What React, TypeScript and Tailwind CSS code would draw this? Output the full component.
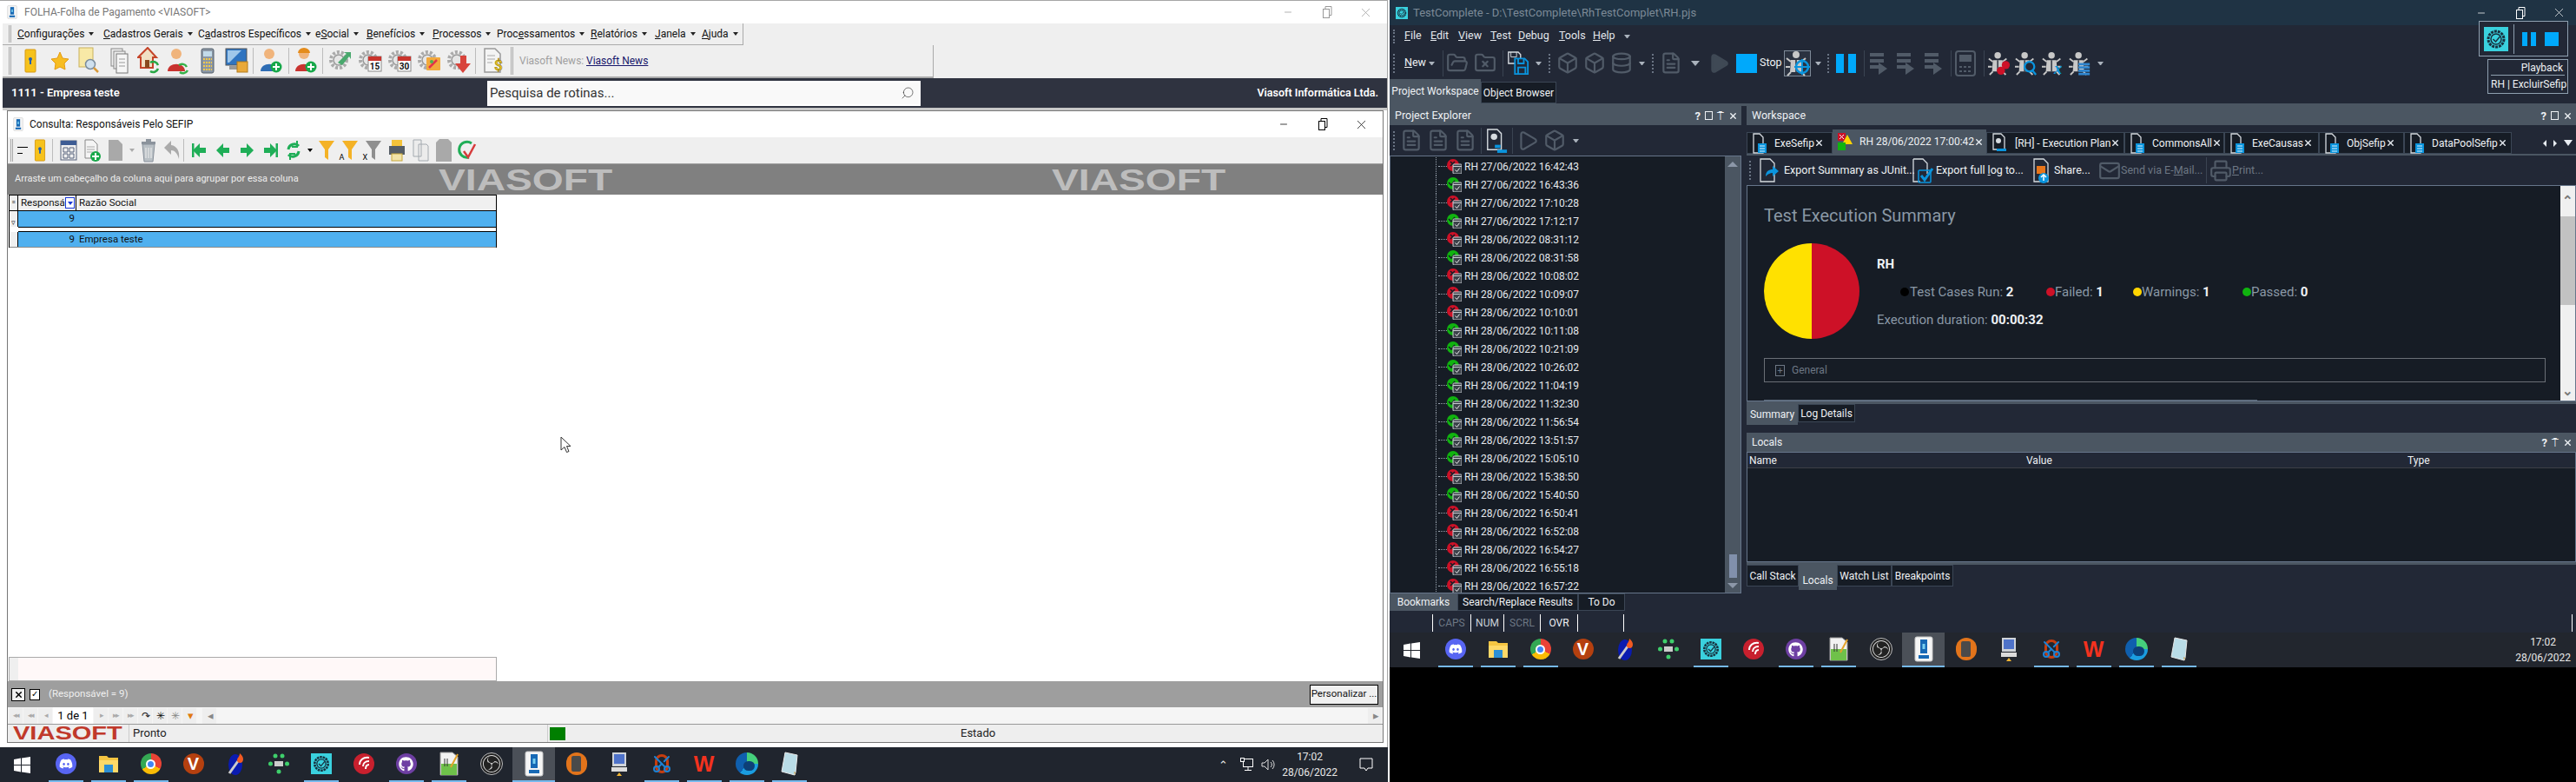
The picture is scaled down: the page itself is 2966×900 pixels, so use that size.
import type { ReactNode } from "react";
import {
  Box,
  Database,
  FileText,
  FolderOpen,
  FolderX,
  Mail,
  Minus,
  Play,
  Printer,
  Scissors,
  Search,
  X,
} from "lucide-react";
import { FaDiscord, FaGithub } from "react-icons/fa";
import { SiObsstudio } from "react-icons/si";

const caret = "inline-block h-0 w-0 border-x-[3px] border-t-[4px] border-x-transparent";

const Sep = ({ className = "" }: { className?: string }) => (
  <div className={`h-[30px] w-px shrink-0 ${className}`} />
);

const Cell = ({ className = "w-[34px]", children }: { className?: string; children: ReactNode }) => (
  <div className={`flex shrink-0 items-center justify-center ${className}`}>{children}</div>
);

/* ---------- small colour icons of the payroll app ---------- */

const Gear = ({ children }: { children?: ReactNode }) => (
  <svg width="30" height="32" viewBox="0 0 30 32">
    <circle cx="13" cy="15" r="9" fill="none" stroke="#aaa" strokeWidth="4" strokeDasharray="3 2" />
    <circle cx="13" cy="15" r="6" fill="#e6e6e6" stroke="#999" strokeWidth="1.5" />
    {children}
  </svg>
);

const Person = ({ body, badge }: { body: string; badge?: ReactNode }) => (
  <svg width="26" height="32" viewBox="0 0 26 32">
    <circle cx="11" cy="8" r="6" fill="#f0b47c" />
    <path d="M1 28 C1 17 21 17 21 28 Z" fill={body} />
    {badge}
  </svg>
);

const plusBadge = (
  <g>
    <circle cx="19" cy="23" r="6.5" fill="#17a84a" />
    <path d="M19 19v8M15 23h8" stroke="#fff" strokeWidth="2" />
  </g>
);

const PaperIcon = ({ fill = "#f4f4f4", stroke = "#999", children }: { fill?: string; stroke?: string; children?: ReactNode }) => (
  <svg width="26" height="32" viewBox="0 0 26 32">
    <path d="M3 2h12l6 6v21H3z" fill={fill} stroke={stroke} strokeWidth="1.5" />
    {children}
  </svg>
);

const Funnel = ({ fill, mark }: { fill: string; mark?: string }) => (
  <div className="relative">
    <svg width="20" height="26" viewBox="0 0 20 26">
      <path d="M1 2h18l-7 10v12l-4-3v-9z" fill={fill} />
    </svg>
    {mark && <span className="absolute bottom-0 -left-[2px] text-[9px] leading-none text-black">{mark}</span>}
  </div>
);

const Arrow = ({ dir, bar }: { dir: "l" | "r"; bar?: boolean }) => (
  <svg width="18" height="20" viewBox="0 0 18 20" className={dir === "l" ? "" : "-scale-x-100"}>
    <path d="M9 2 1 10l8 8v-5h7V7H9z" fill="#1fae57" />
    {bar && <rect x="0" y="2" width="2.5" height="16" fill="#1fae57" />}
  </svg>
);

const PayrollTools = () => (
  <>
    <div className="ml-[7px] mr-[3px] h-[32px] w-[3px] shrink-0 border-x border-[#a9a9a9]" />
    <div className="w-[2px] shrink-0" />
    <Cell>
      <svg width="14" height="28" viewBox="0 0 14 28"><rect x="1" y="1" width="12" height="26" rx="1" fill="#f6c21c" stroke="#d79a13" /><circle cx="7" cy="12" r="2" fill="#245fb0" /><rect x="6" y="12" width="2" height="6" fill="#245fb0" /></svg>
    </Cell>
    <Cell>
      <svg width="22" height="22" viewBox="0 0 22 22"><path d="m11 1 3 7 7 1-5 5 1 7-6-3-6 3 1-7-5-5 7-1z" fill="#f7bd22" stroke="#e59b14" /></svg>
    </Cell>
    <Cell>
      <svg width="28" height="32" viewBox="0 0 28 32"><rect x="2" y="1" width="16" height="22" fill="#f8e9a6" stroke="#c9b25c" /><circle cx="15" cy="20" r="5.5" fill="#cfe0ee" stroke="#7b8c9c" strokeWidth="1.5" /><path d="m19 24 5 5" stroke="#d99a3a" strokeWidth="2.5" /></svg>
    </Cell>
    <Cell>
      <svg width="22" height="30" viewBox="0 0 22 30"><rect x="2" y="1" width="13" height="20" fill="#eee" stroke="#888" /><rect x="5" y="4" width="13" height="20" fill="#eee" stroke="#888" /><rect x="8" y="7" width="13" height="22" fill="#f6f6f6" stroke="#777" /><path d="M11 13h7M11 17h7M11 21h7" stroke="#999" /></svg>
    </Cell>
    <Cell>
      <svg width="26" height="32" viewBox="0 0 26 32"><path d="M12 1 1 12h3v12h14V12h4z" fill="#f1e0c4" stroke="#c5452a" strokeWidth="2" /><rect x="9" y="15" width="5" height="9" fill="#8a4a1e" /><path d="M15 18a6 6 0 0 1 9 3M24 25a6 6 0 0 1-9 3" fill="none" stroke="#28a745" strokeWidth="2.5" /></svg>
    </Cell>
    <Cell>
      <Person body="#c8332f" badge={<path d="M14 21a6 6 0 0 1 9 2M24 27a6 6 0 0 1-9 2" fill="none" stroke="#36b24a" strokeWidth="2.5" />} />
    </Cell>
    <Cell>
      <svg width="16" height="30" viewBox="0 0 16 30"><rect x="1" y="1" width="14" height="28" rx="2" fill="#8b97a5" stroke="#55606c" /><rect x="3" y="4" width="10" height="6" fill="#c3dbe9" /><path d="M3 13h10M3 17h10M3 21h10M3 25h10" stroke="#f2c84b" strokeWidth="2" strokeDasharray="2 1" /></svg>
    </Cell>
    <Cell>
      <svg width="28" height="30" viewBox="0 0 28 30"><rect x="1" y="1" width="24" height="19" fill="#2f74c0" stroke="#555" /><path d="M3 3h16L5 17H3z" fill="#9fc7ea" /><rect x="5" y="21" width="14" height="4" fill="#999" /><rect x="14" y="16" width="12" height="12" fill="#e9a93a" stroke="#b27a1c" /></svg>
    </Cell>
    <Sep className="ml-px mr-[3px] bg-[#bcbcbc]" />
    <Cell><Person body="#2e6db4" badge={plusBadge} /></Cell>
    <Sep className="ml-[3px] mr-[2px] bg-[#bcbcbc]" />
    <Cell>
      <Person body="#c8332f" badge={<g><path d="M4 7a7 6 0 0 1 14 0z" fill="#e48c1c" />{plusBadge}</g>} />
    </Cell>
    <Sep className="ml-[2px] mr-[3px] bg-[#bcbcbc]" />
    <Cell><Gear><path d="M12 18 22 8l-3-2h8v8l-2-3-8 10z" fill="#49a86d" /></Gear></Cell>
    <Cell><Gear><rect x="13" y="11" width="15" height="17" fill="#fff" stroke="#888" /><rect x="13" y="11" width="15" height="5" fill="#c9342d" /><text x="20.5" y="26" textAnchor="middle" fontSize="10" fontWeight="700" fill="#111">15</text></Gear></Cell>
    <Cell><Gear><rect x="13" y="11" width="15" height="17" fill="#fff" stroke="#888" /><rect x="13" y="11" width="15" height="5" fill="#c9342d" /><text x="20.5" y="26" textAnchor="middle" fontSize="10" fontWeight="700" fill="#111">30</text></Gear></Cell>
    <Cell><Gear><rect x="12" y="12" width="16" height="15" rx="1" fill="#f2a93c" /><path d="m15 24 9-9" stroke="#e2334a" strokeWidth="2.5" /><circle cx="18" cy="17" r="2" fill="#4cb050" /></Gear></Cell>
    <Cell><Gear><path d="M17 10h7v9h5L20 30l-9-11h6z" fill="#d8443c" /></Gear></Cell>
    <Sep className="ml-[2px] mr-[3px] bg-[#bcbcbc]" />
    <Cell>
      <PaperIcon><path d="M6 10h9M6 14h9M6 18h6" stroke="#aaa" /><text x="19" y="27" textAnchor="middle" fontSize="17" fontWeight="700" fill="#e8c21f" stroke="#8a7714" strokeWidth=".5">$</text></PaperIcon>
    </Cell>
  </>
);

const menus: [string, string, string, string][] = [
  ["", "C", "onfigurações", "w-[99px]"],
  ["", "C", "adastros Gerais", "w-[109px]"],
  ["C", "a", "dastros Específicos", "w-[135px]"],
  ["e", "S", "ocial", "w-[59px]"],
  ["", "B", "enefícios", "w-[76px]"],
  ["", "P", "rocessos", "w-[74px]"],
  ["Proc", "e", "ssamentos", "w-[108px]"],
  ["", "R", "elatórios", "w-[74px]"],
  ["", "J", "anela", "w-[54px]"],
  ["", "A", "juda", "w-[48px]"],
];

const WinButtons = ({ color }: { color: string }) => (
  <div className={`flex items-center ${color}`}>
    <Cell className="w-[45px]"><Minus size={12} strokeWidth={1.5} /></Cell>
    <Cell className="w-[45px]">
      <svg width="12" height="14" viewBox="0 0 12 14" fill="none" stroke="currentColor"><rect x="1.5" y="3.5" width="7" height="10" /><path d="M4 3V.5h7v10H9" /></svg>
    </Cell>
    <Cell className="w-[45px]"><X size={17} strokeWidth={1} /></Cell>
  </div>
);

const Logo = ({ className }: { className: string }) => (
  <div className={`origin-left scale-x-[1.32] font-['Liberation_Sans',sans-serif] font-bold leading-none ${className}`}>VIASOFT</div>
);

const NavBtn = ({ g, className = "text-[#aaa]" }: { g: string; className?: string }) => (
  <div className={`flex h-[18px] w-[16px] shrink-0 items-center justify-center bg-[#eeeeee] text-[9px] leading-none tracking-[-2px] ${className}`}>{g}</div>
);

const PayrollWindow = () => (
  <div className="flex h-[860px] w-[1598px] flex-col border-r border-t border-[#a6a6a6] bg-white pl-[3px] text-black">
    <div className="flex h-[26px] shrink-0 items-center justify-between">
      <div className="flex items-center gap-[8px] pl-[5px] text-[12px] text-[#777]">
        <AppGlyph small />
        <span>FOLHA-Folha de Pagamento &lt;VIASOFT&gt;</span>
      </div>
      <div className="pr-[2px]"><WinButtons color="text-[#999]" /></div>
    </div>
    <div className="h-[25px] shrink-0 bg-[#efefef]">
      <div className="flex h-[25px] w-[853px] items-center border-b border-r border-[#aaa] text-[12px] text-[#111]">
        <div className="ml-[7px] mr-[7px] h-[20px] w-[3px] shrink-0 border-x border-[#a9a9a9]" />
        {menus.map(([pre, u, post, w]) => (
          <div key={pre + u + post} className={`flex shrink-0 items-center gap-[5px] ${w}`}>
            <span>{pre}<u>{u}</u>{post}</span>
            <span className={`${caret} border-t-[#222]`} />
          </div>
        ))}
      </div>
    </div>
    <div className="h-[38px] shrink-0 bg-[#efefef]">
      <div className="flex h-[38px] w-[1072px] items-center border-b-2 border-r border-[#aaa]">
        <PayrollTools />
        <div className="ml-[3px] mr-[7px] h-[32px] w-[3px] shrink-0 border-x border-[#a9a9a9]" />
        <span className="w-[70px] text-[12px] text-[#a0a0a0]">Viasoft News:</span>
        <span className="ml-[7px] text-[12px] text-[#17176b] underline">Viasoft News</span>
      </div>
    </div>
    <div className="flex h-[34px] shrink-0 items-center justify-between bg-[#2f3340] pl-[10px] pr-[10px] text-white">
      <span className="w-[548px] text-[13px] font-semibold">1111 - Empresa teste</span>
      <div className="flex h-[29px] w-[499px] items-center justify-between border-2 border-white bg-[#f9f9f9] pl-[1px] pr-[5px] text-[15px] text-[#333]">
        <span>Pesquisa de rotinas...</span>
        <Search size={16} strokeWidth={1} className="-scale-x-100" />
      </div>
      <span className="ml-auto text-[12.5px] font-semibold">Viasoft Informática Ltda.</span>
    </div>
    <div className="h-[3px] shrink-0 bg-[#c8c8c8]" />

    <div className="ml-[5px] flex h-[728px] w-[1585px] shrink-0 flex-col border border-[#777] bg-white">
      <div className="flex h-[30px] shrink-0 items-center justify-between">
        <div className="flex items-center gap-[7px] pl-[6px] text-[12px] text-[#111]">
          <AppGlyph small />
          <span>Consulta: Responsáveis Pelo SEFIP</span>
        </div>
        <div className="pr-[2px]"><WinButtons color="text-black" /></div>
      </div>
      <div className="flex h-[30px] shrink-0 items-center bg-[#efefef]">
        <div className="ml-[3px] h-[26px] w-[3px] shrink-0 border-x border-[#a9a9a9]" />
        <div className="ml-[5px] flex w-[12px] flex-col gap-[6px]"><div className="h-px w-[12px] bg-black" /><div className="h-px w-[6px] bg-black" /></div>
        <Cell className="ml-[6px] w-[16px]">
          <svg width="14" height="26" viewBox="0 0 14 28"><rect x="1" y="1" width="12" height="26" rx="1" fill="#f6c21c" stroke="#d79a13" /><circle cx="7" cy="12" r="2" fill="#245fb0" /><rect x="6" y="12" width="2" height="6" fill="#245fb0" /></svg>
        </Cell>
        <Sep className="ml-[6px] mr-[4px] !h-[26px] bg-[#bcbcbc]" />
        <Cell className="w-[27px]">
          <svg width="20" height="24" viewBox="0 0 20 24"><rect x="1" y="1" width="18" height="22" fill="#f0f0f0" stroke="#55607a" /><rect x="1" y="1" width="18" height="5" fill="#3d5c94" /><path d="M4 9h5v5H4zM11 9h5v5h-5zM4 16h5v5H4zM11 16h5v5h-5z" fill="none" stroke="#55607a" /></svg>
        </Cell>
        <Cell className="w-[27px]">
          <svg width="20" height="28" viewBox="0 0 20 28"><path d="M2 2h9l5 5v16H2z" fill="#f4f4f4" stroke="#888" /><path d="M4 10h9M4 13h9M4 16h7" stroke="#aaa" /><circle cx="14" cy="21" r="6" fill="#17a84a" /><path d="M14 17v8M10 21h8" stroke="#fff" strokeWidth="2" /></svg>
        </Cell>
        <Cell className="w-[27px]"><svg width="18" height="26" viewBox="0 0 18 26"><path d="M1 1h11l5 5v19H1z" fill="#a9a9a9" /></svg></Cell>
        <Cell className="w-[11px]"><span className={`${caret} border-t-[#aaa]`} /></Cell>
        <Cell className="w-[27px]"><svg width="18" height="28" viewBox="0 0 18 28"><path d="M2 7h14l-2 20H4z" fill="#b9c0c5" stroke="#88909a" /><rect x="1" y="4" width="16" height="3" fill="#8b939c" /><rect x="6" y="1" width="6" height="3" fill="#8b939c" /><path d="M6 11v12M9 11v12M12 11v12" stroke="#f0f0f0" /></svg></Cell>
        <Cell className="w-[27px]"><svg width="20" height="24" viewBox="0 0 20 24"><path d="M9 1 1 9l8 8v-5c4 0 7 3 9 10 1-9-2-15-9-16z" fill="#aaa" /></svg></Cell>
        <Sep className="mr-[4px] !h-[26px] bg-[#bcbcbc]" />
        <Cell className="w-[27px]"><Arrow dir="l" bar /></Cell>
        <Cell className="w-[27px]"><Arrow dir="l" /></Cell>
        <Cell className="w-[27px]"><Arrow dir="r" /></Cell>
        <Cell className="w-[27px]"><Arrow dir="r" bar /></Cell>
        <Cell className="w-[27px]">
          <svg width="18" height="26" viewBox="0 0 18 26" fill="none" stroke="#1fae57" strokeWidth="3"><path d="M3 12a7 7 0 0 1 12-4M15 14a7 7 0 0 1-12 4" /><path d="M13 2v7h-6M5 24v-7h6" strokeWidth="2" /></svg>
        </Cell>
        <Cell className="w-[11px]"><span className={`${caret} border-t-black`} /></Cell>
        <Cell className="w-[27px]"><Funnel fill="#f4b226" /></Cell>
        <Cell className="w-[27px]"><Funnel fill="#f4b226" mark="A" /></Cell>
        <Cell className="w-[27px]"><Funnel fill="#8f8f8f" mark="X" /></Cell>
        <Cell className="w-[27px]"><svg width="20" height="26" viewBox="0 0 20 26"><rect x="4" y="1" width="12" height="7" fill="#f4c33a" /><rect x="1" y="8" width="18" height="10" fill="#555d66" /><rect x="4" y="17" width="12" height="8" fill="#f1e3a8" stroke="#c9a93c" /></svg></Cell>
        <Cell className="w-[27px]"><svg width="20" height="28" viewBox="0 0 20 28"><path d="M2 2h9v19H2zM8 7h9l2 2v17H8z" fill="#ececec" stroke="#a4aab0" /></svg></Cell>
        <Cell className="w-[27px]"><svg width="20" height="28" viewBox="0 0 20 28"><path d="M1 5 5 1h10l4 4v22H1z" fill="#a9a9a9" /></svg></Cell>
        <Cell className="w-[27px]"><svg width="22" height="28" viewBox="0 0 22 28" fill="none"><path d="M16 6a9 9 0 1 0-3 16" stroke="#1fae57" strokeWidth="3" /><path d="m7 15 5 7 8-15" stroke="#d63b3b" strokeWidth="2.5" /></svg></Cell>
      </div>
      <div className="h-px shrink-0 bg-[#a0a0a0]" />
      <div className="flex h-[35px] shrink-0 items-center bg-[#808080] pl-[8px] text-[11px] text-[#eee]">
        <span className="w-[488px]">Arraste um cabeçalho da coluna aqui para agrupar por essa coluna</span>
        <Logo className="w-[706px] text-[35px] text-[#bdbdbd]" />
        <Logo className="text-[35px] text-[#bdbdbd]" />
      </div>

      <div className="relative flex h-[560px] shrink-0 flex-col pl-px">
        <div className="flex w-[562px] flex-col border-x border-black text-[11.5px] text-[#111]">
          <div className="flex h-[19px] items-center border-y border-black bg-[#f0f0f0]">
            <div className="flex h-full w-[10px] items-center justify-center border-r border-black text-[7px] leading-none">≡</div>
            <div className="flex h-full w-[67px] items-center justify-between border-r border-black pl-[3px] pr-[1px]">
              <span className="overflow-hidden">Responsá</span>
              <span className="flex h-[13px] w-[11px] shrink-0 items-center justify-center border border-[#1a37d6] bg-white"><span className={`${caret} border-t-[#1a37d6]`} /></span>
            </div>
            <span className="pl-[3px]">Razão Social</span>
          </div>
          <div className="flex h-[18px] items-stretch">
            <div className="flex w-[10px] items-end justify-center border-r border-black bg-[#f0f0f0] text-[9px] leading-none">▿</div>
            <div className="flex w-[67px] items-center justify-end bg-[#4fb0ef] pr-[2px]">9</div>
            <div className="flex-1 bg-[#4fb0ef]" />
          </div>
          <div className="ml-[10px] h-[6px] border-y border-black bg-white" />
          <div className="flex h-[18px] items-stretch border-b border-[#8a8a8a]">
            <div className="w-[10px] border-r border-black bg-[#f0f0f0]" />
            <div className="flex w-[67px] items-center justify-end bg-[#4fb0ef] pr-[2px]">9</div>
            <div className="flex flex-1 items-center bg-[#4fb0ef] pl-[3px]">Empresa teste</div>
          </div>
        </div>
        <div className="mt-auto flex h-[28px] w-[562px] border border-[#aaa] bg-[#fff8f8]">
          <div className="w-[10px] bg-[#efefef]" />
        </div>
        {/* mouse pointer left over the empty grid */}
        <svg width="13" height="20" viewBox="0 0 13 20" className="absolute left-[636px] top-[278px]">
          <path d="M1 1v15l4-3.5 2.5 6 2.5-1-2.5-6H12z" fill="#fff" stroke="#333" />
        </svg>
      </div>

      <div className="flex h-[30px] shrink-0 items-center justify-between bg-[#9e9e9e] pl-[4px] pr-[5px]">
        <div className="flex items-center gap-[5px]">
          <div className="flex h-[15px] w-[16px] items-center justify-center border border-black bg-[#f0f0f0]"><X size={11} strokeWidth={3} /></div>
          <div className="flex h-[13px] w-[12px] items-center justify-center border border-black bg-white text-[10px] leading-none">✓</div>
          <span className="ml-[5px] text-[11.5px] text-[#eee]">(Responsável = 9)</span>
        </div>
        <div className="flex h-[23px] w-[79px] items-center justify-center border border-black bg-[#f0f0f0] text-[11.5px] text-[#111]">Personalizar ...</div>
      </div>
      <div className="flex h-[20px] shrink-0 items-center gap-px border-b border-[#999] bg-[#f5f5f5] pl-px pr-px">
        <NavBtn g="◂◂" /><NavBtn g="◂◂" /><NavBtn g="◂" />
        <div className="flex w-[46px] justify-center bg-white text-[13px]">1 de 1</div>
        <NavBtn g="▸" /><NavBtn g="▸▸" /><NavBtn g="▸▸" />
        <NavBtn g="↷" className="text-[12px] text-[#222]" />
        <NavBtn g="✳" className="text-[12px] text-[#111]" />
        <NavBtn g="✳" className="text-[12px] text-[#888]" />
        <NavBtn g="▾" className="text-[13px] text-[#e07a10]" />
        <NavBtn g="◂" className="ml-[6px] text-[13px] text-[#888]" />
        <NavBtn g="▸" className="ml-auto text-[13px] text-[#888]" />
      </div>
      <div className="flex min-h-0 flex-1 items-center bg-[#eeeeee] text-[13px] text-[#222]">
        <Logo className="ml-[6px] w-[133px] text-[22px] text-[#c0392b]" />
        <div className="h-full w-px bg-[#ccc]" />
        <span className="ml-[4px] w-[477px]">Pronto</span>
        <div className="h-full w-px bg-[#ccc]" />
        <div className="ml-[2px] mr-[455px] h-[15px] w-[18px] bg-[#007f00]" />
        <span>Estado</span>
      </div>
    </div>
    <div className="flex-1" />
  </div>
);

/* ---------- taskbar ---------- */

const AppGlyph = ({ small }: { small?: boolean }) => (
  <svg width={small ? 12 : 22} height={small ? 16 : 30} viewBox="0 0 22 30">
    <rect x="1" y="1" width="20" height="28" rx="2" fill="#f5f5f5" stroke="#c8c8c8" />
    <rect x="7" y="4" width="8" height="16" fill="#1769b5" />
    <rect x="9.5" y="9" width="3" height="6" fill="#79d0f0" />
    <rect x="5" y="22" width="12" height="4" fill="#1769b5" />
  </svg>
);

const TcBadge = ({ size }: { size: number }) => (
  <svg width={size} height={size} viewBox="0 0 28 28">
    <rect width="28" height="28" fill="#3ad1de" />
    <circle cx="14" cy="14" r="9" fill="none" stroke="#17313f" strokeWidth="3" strokeDasharray="3 1" />
    <circle cx="14" cy="14" r="6" fill="none" stroke="#17313f" strokeWidth="1.5" />
    <path d="m10.5 14 3 3 5-6" fill="none" stroke="#17313f" strokeWidth="1.5" />
  </svg>
);

const Round = ({ bg, children }: { bg: string; children?: ReactNode }) => (
  <div className={`flex h-[24px] w-[24px] items-center justify-center rounded-full ${bg}`}>{children}</div>
);

const taskIcons: { key: string; on: boolean; active?: boolean; node: ReactNode }[] = [
  { key: "discord", on: true, node: <Round bg="bg-[#5865f2]"><FaDiscord size={16} color="#fff" /></Round> },
  { key: "files", on: true, node: <svg width="24" height="24" viewBox="0 0 24 24"><path d="M1 3h9l2 2h11v17H1z" fill="#f5c542" /><rect x="1" y="8" width="22" height="14" fill="#ffd968" /><rect x="7" y="13" width="10" height="9" fill="#2d8fd5" /></svg> },
  { key: "chrome", on: true, node: <div className="flex h-[24px] w-[24px] items-center justify-center rounded-full bg-[conic-gradient(#ea4335_0_33%,#fbbc05_33%_66%,#34a853_66%_100%)]"><div className="h-[11px] w-[11px] rounded-full border-2 border-white bg-[#4285f4]" /></div> },
  { key: "vivaldi", on: false, node: <Round bg="bg-[#b5400f]"><span className="font-['Liberation_Sans',sans-serif] text-[20px] font-bold leading-none text-white">V</span></Round> },
  { key: "torch", on: false, node: <svg width="24" height="28" viewBox="0 0 24 28"><ellipse cx="11" cy="15" rx="8" ry="12" fill="#0a1bb0" /><path d="M4 25 14 11" stroke="#ccc" strokeWidth="3" /><path d="M16 2c4 3 5 7 3 10-2 2-6 1-6-2 0-3 3-4 3-8z" fill="#f15a22" /></svg> },
  { key: "dots", on: false, node: <svg width="24" height="24" viewBox="0 0 24 24" fill="#3ecf6b"><circle cx="8" cy="3" r="2.5" /><circle cx="16" cy="3" r="2.5" /><circle cx="2.5" cy="12" r="2.5" /><circle cx="21.5" cy="12" r="2.5" /><circle cx="12" cy="21" r="2.5" /><rect x="7" y="9" width="10" height="6" fill="#ccc" /></svg> },
  { key: "tc", on: true, node: <TcBadge size={24} /> },
  { key: "delphi", on: false, node: <Round bg="bg-[#c8202e]"><svg width="16" height="18" viewBox="0 0 16 18" fill="none" stroke="#fff" strokeWidth="2"><path d="M14 2C7 1 3 5 3 10M14 6c-5 0-7 3-7 6M14 10c-3 0-4 2-4 5" /></svg></Round> },
  { key: "github", on: true, node: <Round bg="bg-[#6e3fa3]"><FaGithub size={17} color="#fff" /></Round> },
  { key: "notes", on: true, node: <svg width="22" height="28" viewBox="0 0 22 28"><path d="M1 1h14l6 5v21H1z" fill="#f2f2f2" stroke="#999" /><rect x="2" y="14" width="18" height="13" fill="#6fc14a" /><path d="M6 8v9M9 8v9" stroke="#333" /><path d="m13 18 8-15" stroke="#e3a32b" strokeWidth="2" /></svg> },
  { key: "obs", on: false, node: <div className="flex h-[24px] w-[24px] items-center justify-center rounded-full bg-[#222] text-[#ddd] outline outline-1 outline-[#bbb]"><SiObsstudio size={20} /></div> },
  { key: "app", on: true, active: true, node: <AppGlyph /> },
  { key: "disk", on: false, node: <div className="flex h-[26px] w-[24px] items-center justify-center rounded-full bg-[#e2741b]"><div className="h-[18px] w-[11px] rounded-[2px] bg-[#4a4a4a]" /></div> },
  { key: "computer", on: false, node: <svg width="20" height="28" viewBox="0 0 20 28"><rect x="2" y="1" width="16" height="16" fill="#cfd3d8" /><rect x="4" y="3" width="12" height="11" fill="#4e72c9" /><rect x="1" y="18" width="18" height="5" fill="#dcdcdc" /><path d="M7 28h6l-3-4z" fill="#f2b632" /></svg> },
  { key: "snip", on: true, node: <div className="relative flex h-[28px] w-[24px] items-center justify-center"><div className="absolute h-[22px] w-[16px] rounded-full border-[3px] border-[#c63d0f]" /><Scissors size={24} className="relative -rotate-90 text-[#1c82d4]" /></div> },
  { key: "wps", on: true, node: <span className="font-['Liberation_Sans',sans-serif] text-[25px] font-bold leading-none text-[#f4321e]">W</span> },
  { key: "edge", on: true, node: <div className="flex h-[26px] w-[26px] items-center justify-center rounded-full bg-[conic-gradient(#45d07c_0_25%,#1a9de0_25%_60%,#0f5fae_60%_100%)]"><div className="ml-[6px] mt-[4px] h-[11px] w-[13px] rounded-full bg-[#0d3f77]" /></div> },
  { key: "pad", on: true, node: <svg width="22" height="28" viewBox="0 0 22 28"><path d="M6 1 20 4l-2 20-1 3L2 23z" fill="#b9dce7" stroke="#e8e8e8" /><path d="m18 24-1 3-1-4z" fill="#c9a153" /></svg> },
];

const Taskbar = ({ className, children }: { className: string; children: ReactNode }) => (
  <div className={`flex h-[40px] shrink-0 items-stretch ${className}`}>
    <div className="flex w-[51px] shrink-0 items-center justify-center">
      <svg width="19" height="19" viewBox="0 0 19 19" fill="#fff"><path d="M0 3 8 1.6V9H0zM9 1.4 19 0v9H9zM0 10h8v7.4L0 16zM9 10h10v9L9 17.6z" /></svg>
    </div>
    {taskIcons.map((t) => (
      <div key={t.key} className={`flex w-[49px] shrink-0 flex-col items-center justify-between ${t.active ? "bg-[#4b5058]" : ""}`}>
        <div className="flex flex-1 items-center justify-center">{t.node}</div>
        <div className={`h-[2px] shrink-0 ${t.on ? "bg-[#76b9ed]" : ""} ${t.active ? "w-full" : "w-[40px]"}`} />
      </div>
    ))}
    <div className="flex flex-1 items-center justify-end text-[#e8e8e8]">{children}</div>
  </div>
);

const Clock = () => (
  <div className="flex flex-col items-center text-[12px] leading-[18px]">
    <span>17:02</span>
    <span>28/06/2022</span>
  </div>
);

/* ---------- dark IDE ---------- */

const Grip = ({ className = "" }: { className?: string }) => (
  <div className={`h-[22px] w-[2px] shrink-0 border-l-2 border-dotted border-[#6a7484] ${className}`} />
);

const DSep = ({ className = "" }: { className?: string }) => (
  <div className={`h-[30px] w-px shrink-0 bg-[#3a4452] ${className}`} />
);

const Ico = ({ className = "", children }: { className?: string; children: ReactNode }) => (
  <div className={`flex w-[26px] shrink-0 items-center justify-center ${className}`}>{children}</div>
);

const DCaret = ({ className = "", big }: { className?: string; big?: boolean }) => (
  <span className={`h-0 shrink-0 border-x-transparent ${big ? "w-[9px] border-x-[5px] border-t-[6px] border-t-[#aab2bc]" : "w-[7px] border-x-[3.5px] border-t-[4px] border-t-[#aab2bc]"} ${className}`} />
);

const dim = { size: 27, strokeWidth: 2, color: "#515b68" };

const Rows = ({ blue }: { blue?: boolean }) => (
  <svg width="26" height="30" viewBox="0 0 26 30" fill="#515b68">
    <path d="M2 3h16v4H2zM2 10h16v4H2zM2 17h10v4H2z" />
    <path d={blue ? "M14 12l10 8-10 8z" : "M12 14l10 7-10 7z"} />
  </svg>
);

const BugShape = ({ children }: { children?: ReactNode }) => (
  <svg width="28" height="32" viewBox="0 0 28 32">
    <circle cx="12" cy="6" r="4" fill="#c8c8c8" />
    <path d="M6 12h12l1 14H5z" fill="#c8c8c8" />
    <path d="M6 14 1 10M18 14l5-4M5 20H0M19 20h5M6 26l-4 4M18 26l4 4" stroke="#c8c8c8" strokeWidth="2" />
    <path d="M12 12v14" stroke="#222836" strokeWidth="1.5" />
    {children}
  </svg>
);

const FileBlue = () => (
  <svg width="18" height="24" viewBox="0 0 18 24" className="shrink-0">
    <path d="M2 1h7l4 4v18H2z" fill="none" stroke="#d6dbe0" strokeWidth="1.3" />
    <rect x="7" y="12" width="10" height="11" fill="#0a94dd" />
    <path d="M9 15h6M9 18h6M9 21h6" stroke="#dff3ff" />
  </svg>
);

const PlanIcon = () => (
  <svg width="18" height="24" viewBox="0 0 18 24" className="shrink-0">
    <path d="M2 1h9l4 4v14H2z" fill="none" stroke="#d6dbe0" strokeWidth="1.3" />
    <circle cx="8" cy="9" r="3" fill="#d6dbe0" />
    <rect x="6" y="18" width="11" height="3" fill="#0a94dd" />
  </svg>
);

const TabX = () => <X size={11} strokeWidth={3} className="shrink-0 text-[#e8edf2]" />;

const DocTab = ({ w, label, icon = <FileBlue />, gap = "gap-[8px]" }: { w: string; label: string; icon?: ReactNode; gap?: string }) => (
  <div className={`flex h-[25px] shrink-0 items-center justify-between border border-[#3b4655] bg-[#161c25] pl-[5px] pr-[9px] ${w}`}>
    <div className={`flex items-center ${gap}`}>
      {icon}
      <span>{label}</span>
    </div>
    <TabX />
  </div>
);

const runs: [string, boolean][] = [
  ["27/06/2022 16:42:43", false], ["27/06/2022 16:43:36", true], ["27/06/2022 17:10:28", false],
  ["27/06/2022 17:12:17", true], ["28/06/2022 08:31:12", false], ["28/06/2022 08:31:58", true],
  ["28/06/2022 10:08:02", false], ["28/06/2022 10:09:07", false], ["28/06/2022 10:10:01", false],
  ["28/06/2022 10:11:08", true], ["28/06/2022 10:21:09", true], ["28/06/2022 10:26:02", true],
  ["28/06/2022 11:04:19", true], ["28/06/2022 11:32:30", true], ["28/06/2022 11:56:54", true],
  ["28/06/2022 13:51:57", true], ["28/06/2022 15:05:10", true], ["28/06/2022 15:38:50", false],
  ["28/06/2022 15:40:50", true], ["28/06/2022 16:50:41", false], ["28/06/2022 16:52:08", false],
  ["28/06/2022 16:54:27", false], ["28/06/2022 16:55:18", false], ["28/06/2022 16:57:22", false],
];

const RunIcon = ({ ok }: { ok: boolean }) => (
  <svg width="17" height="17" viewBox="0 0 17 17" className="shrink-0">
    <circle cx="7" cy="7" r="7" fill={ok ? "#10b30f" : "#cd1127"} />
    <path d={ok ? "m2 6 3 3 4-5" : "m4 3 5 5M9 3 4 8"} stroke="#161c25" strokeWidth="1.6" fill="none" />
    <rect x="7" y="6" width="10" height="11" rx="1" fill="#3c424a" stroke="#c9cdd2" />
    <path d="M7 8.5h10" stroke="#c9cdd2" />
    <path d="m9.5 12.5 2 2 3-4" stroke="#eee" fill="none" />
  </svg>
);

const PanelHead = ({ title, children, className = "" }: { title: string; children: ReactNode; className?: string }) => (
  <div className={`flex h-[22px] shrink-0 items-center justify-between bg-[#4b5662] pl-[6px] pr-[4px] text-[#eef1f4] ${className}`}>
    <span>{title}</span>
    <div className="flex items-center gap-[5px]">{children}</div>
  </div>
);

const Q = () => <span className="text-[13px] font-bold leading-none">?</span>;
const Sq = () => <div className="h-[10px] w-[9px] border border-[#eef1f4]" />;
const Pin = () => <span className="text-[13px] leading-none">⍑</span>;
const Xx = () => <X size={11} strokeWidth={3} />;

const TestComplete = () => (
  <div className="relative flex h-[900px] w-[1366px] flex-col bg-black text-[12px] text-[#eef1f4]">
    <div className="flex h-[29px] shrink-0 items-center justify-between bg-[#1f3344]">
      <div className="flex items-center gap-[6px] pl-[7px] text-[13px] text-[#7c8a97]">
        <TcBadge size={14} />
        <span>TestComplete - D:\TestComplete\RhTestComplet\RH.pjs</span>
      </div>
      <div className="mr-[-3px] text-white"><WinButtons color="text-white" /></div>
    </div>

    <div className="flex h-[25px] shrink-0 items-center bg-[#222836] text-[12.5px] text-[#e3e7ec]">
      <Grip className="ml-[4px] !h-[16px]" />
      <span className="ml-[11px] w-[30px]"><u>F</u>ile</span>
      <span className="w-[32px]"><u>E</u>dit</span>
      <span className="w-[37px]"><u>V</u>iew</span>
      <span className="w-[32px]"><u>T</u>est</span>
      <span className="w-[47px]"><u>D</u>ebug</span>
      <span className="w-[39px]"><u>T</u>ools</span>
      <span className="w-[36px]"><u>H</u>elp</span>
      <DCaret />
    </div>
    <div className="flex h-[37px] shrink-0 items-center bg-[#222836] text-[12.5px]">
      <Grip className="ml-[4px]" />
      <span className="ml-[11px] w-[24px]"><u>N</u>ew</span>
      <DCaret className="ml-[4px]" />
      <DSep className="ml-[9px]" />
      <Ico className="ml-[3px]"><FolderOpen {...dim} /></Ico>
      <Ico className="ml-[6px]"><FolderX {...dim} /></Ico>
      <DSep className="ml-[7px]" />
      <Ico className="ml-[4px]">
        <svg width="28" height="32" viewBox="0 0 28 32" fill="none"><path d="M2 2h12l3 3v11H2z" stroke="#d6dbe0" strokeWidth="1.5" /><path d="M5 2v6h7V2" stroke="#d6dbe0" /><path d="M10 10h12l4 4v15H10z" fill="#222836" stroke="#0a94dd" strokeWidth="2" /><path d="M14 10v6h7v-6M14 29v-8h9v8" stroke="#0a94dd" strokeWidth="2" /></svg>
      </Ico>
      <DCaret className="ml-[7px]" />
      <Grip className="ml-[8px]" />
      <Ico className="ml-[7px]"><Box {...dim} /></Ico>
      <Ico className="ml-[5px]"><Box {...dim} /></Ico>
      <Ico className="ml-[5px]"><Database {...dim} /></Ico>
      <DCaret className="ml-[7px]" />
      <Grip className="ml-[8px]" />
      <Ico className="ml-[7px]"><FileText {...dim} /></Ico>
      <DCaret big className="ml-[10px]" />
      <Ico className="ml-[9px]"><Play size={28} fill="#3f4955" color="#3f4955" /></Ico>
      <div className="ml-[7px] h-[22px] w-[24px] shrink-0 bg-[#00a9fb]" />
      <span className="ml-[3px] w-[26px]">Stop</span>
      <div className="ml-[2px] flex h-[30px] w-[31px] shrink-0 items-center justify-center border border-[#7e8a98] bg-[#2b3240]">
        <BugShape><circle cx="19" cy="20" r="7" fill="none" stroke="#0a94dd" strokeWidth="2.5" /><path d="M19 11v18M10 20h18" stroke="#0a94dd" strokeWidth="2" /></BugShape>
      </div>
      <DCaret className="ml-[5px]" />
      <Grip className="ml-[7px]" />
      <div className="ml-[8px] flex h-[22px] w-[23px] shrink-0 justify-between">
        <div className="w-[9px] bg-[#00a9fb]" /><div className="w-[9px] bg-[#00a9fb]" />
      </div>
      <DSep className="ml-[9px]" />
      <Ico className="ml-[4px]"><Rows /></Ico>
      <Ico className="ml-[5px]"><Rows /></Ico>
      <Ico className="ml-[6px]"><Rows /></Ico>
      <DSep className="ml-[6px]" />
      <Ico className="ml-[3px]">
        <svg width="24" height="30" viewBox="0 0 24 30"><rect x="1" y="1" width="22" height="28" rx="3" fill="none" stroke="#515b68" strokeWidth="2" /><rect x="5" y="5" width="14" height="8" fill="#515b68" /><path d="M5 19h3M10 19h3M15 19h3M5 24h3M10 24h3M15 24h3" stroke="#515b68" strokeWidth="2" /></svg>
      </Ico>
      <DSep className="ml-[8px]" />
      <Ico className="ml-[4px]"><BugShape><circle cx="22" cy="18" r="5" fill="#cd1127" /><circle cx="16" cy="25" r="5" fill="#cd1127" /></BugShape></Ico>
      <Ico className="ml-[5px]"><BugShape><circle cx="18" cy="20" r="6" fill="#222836" stroke="#0a94dd" strokeWidth="2.5" /><path d="m22 25 4 5" stroke="#0a94dd" strokeWidth="2.5" /></BugShape></Ico>
      <Ico className="ml-[5px]"><BugShape><text x="20" y="29" textAnchor="middle" fontSize="20" fontStyle="italic" fontWeight="700" fill="#0a94dd" fontFamily="Liberation Serif, serif">x</text></BugShape></Ico>
      <Ico className="ml-[5px]"><BugShape><path d="M12 17h14M12 21h14M12 25h14M12 29h14" stroke="#2f86d0" strokeWidth="3" /></BugShape></Ico>
      <DCaret className="ml-[7px]" />
    </div>

    <div className="flex h-[28px] shrink-0 items-end bg-[#222836] text-[12px]">
      <div className="flex h-[28px] w-[105px] items-center justify-center bg-[#4b5662]">Project Workspace</div>
      <div className="flex h-[25px] w-[87px] items-center justify-center border border-[#3b4655] bg-[#161c25]">Object Browser</div>
    </div>
    <div className="h-[3px] shrink-0 bg-[#4b5662]" />

    <div className="flex h-[583px] shrink-0 gap-[6px] bg-[#222836]">
      <div className="flex w-[405px] shrink-0 flex-col">
        <PanelHead title="Project Explorer" className="text-[12.5px]"><Q /><Sq /><Pin /><Xx /></PanelHead>
        <div className="flex h-[35px] shrink-0 items-center">
          <Grip className="ml-[4px]" />
          <Ico className="ml-[6px]"><FileText {...dim} /></Ico>
          <Ico className="ml-[5px]"><FileText {...dim} /></Ico>
          <Ico className="ml-[5px]"><FileText {...dim} /></Ico>
          <DSep className="ml-[5px]" />
          <Ico className="ml-[4px]">
            <svg width="28" height="32" viewBox="0 0 28 32" fill="none"><path d="M3 2h12l5 5v20H3z" stroke="#d6dbe0" strokeWidth="1.5" /><circle cx="11" cy="11" r="4" fill="#d6dbe0" /><rect x="12" y="21" width="7" height="4" fill="#0a94dd" /><rect x="15" y="27" width="12" height="4" fill="#0a94dd" /></svg>
          </Ico>
          <DSep className="ml-[5px]" />
          <Ico className="ml-[4px]"><Play size={26} color="#515b68" /></Ico>
          <Ico className="ml-[5px]"><Box {...dim} /></Ico>
          <DCaret className="ml-[8px]" />
        </div>
        <div className="flex h-[504px] shrink-0 border border-[#66758a] bg-[#161c25]">
          <div className="flex-1 overflow-hidden pt-px text-[12px]">
            {runs.map(([when, ok]) => (
              <div key={when} className="flex h-[21px] items-center">
                <div className="ml-[52px] h-full border-l border-dotted border-[#9aa4b0]" />
                <div className="ml-[2px] w-[10px] border-t border-dotted border-[#9aa4b0]" />
                <RunIcon ok={ok} />
                <span className="ml-[3px] text-[#e5e9ee]">RH {when}</span>
              </div>
            ))}
          </div>
          <div className="flex w-[18px] shrink-0 flex-col items-center bg-[#4b5662] pb-[5px] pt-[6px]">
            <span className="h-0 w-0 border-x-[6px] border-b-[6px] border-x-transparent border-b-[#8c97a8]" />
            <div className="mt-auto h-[27px] w-[9px] bg-[#8190ab]" />
            <span className="mt-[6px] h-0 w-0 border-x-[6px] border-t-[6px] border-x-transparent border-t-[#8c97a8]" />
          </div>
        </div>
        <div className="flex h-[20px] shrink-0 text-[12px]">
          <div className="flex w-[78px] items-center justify-center bg-[#4b5662]">Bookmarks</div>
          <div className="flex w-[139px] items-center justify-center border border-[#3b4655] bg-[#161c25]">Search/Replace Results</div>
          <div className="flex w-[54px] items-center justify-center border border-[#3b4655] bg-[#161c25]">To Do</div>
        </div>
      </div>

      <div className="flex min-w-0 flex-1 flex-col">
        <PanelHead title="Workspace" className="text-[12.5px]"><Q /><Sq /><Xx /></PanelHead>
        <div className="flex h-[33px] shrink-0 items-end text-[12px]">
          <DocTab w="w-[99px]" label="ExeSefip" />
          <div className="flex h-[28px] w-[177px] shrink-0 items-center justify-between bg-[#4b5662] pl-[5px] pr-[9px]">
            <div className="flex items-center gap-[8px]">
              <svg width="18" height="22" viewBox="0 0 18 22" className="shrink-0">
                <rect x="1" y="1" width="9" height="9" fill="#cd1127" />
                <path d="m3 3 5 5M8 3 3 8" stroke="#fff" />
                <path d="M12 3 18 14H6z" fill="#ffd400" />
                <rect x="1" y="12" width="9" height="9" fill="#10b30f" />
              </svg>
              <span>RH 28/06/2022 17:00:42</span>
            </div>
            <TabX />
          </div>
          <DocTab w="w-[159px]" label="[RH] - Execution Plan" icon={<PlanIcon />} gap="gap-[9px]" />
          <DocTab w="w-[115px]" label="CommonsAll" />
          <DocTab w="w-[109px]" label="ExeCausas" />
          <DocTab w="w-[98px]" label="ObjSefip" />
          <DocTab w="w-[124px]" label="DataPoolSefip" />
          <div className="ml-auto flex h-[25px] items-center gap-[8px] pr-[4px] text-[#e8edf2]">
            <span className="h-0 w-0 border-y-[4px] border-r-[4px] border-y-transparent border-r-current" />
            <span className="h-0 w-0 border-y-[4px] border-l-[4px] border-y-transparent border-l-current" />
            <span className="h-0 w-0 border-x-[5px] border-t-[7px] border-x-transparent border-t-current" />
          </div>
        </div>
        <div className="h-[2px] shrink-0 bg-[#4b5662]" />
        <div className="flex h-[34px] shrink-0 items-center text-[12.5px]">
          <Grip className="ml-[3px]" />
          <svg width="26" height="30" viewBox="0 0 26 30" fill="none" className="ml-[8px] shrink-0"><path d="M3 2h11l5 5v21H3z" stroke="#d6dbe0" strokeWidth="1.3" /><path d="M9 22c0-6 4-8 8-8v-4l7 6-7 6v-4c-3 0-5 1-8 4z" fill="#0a94dd" /></svg>
          <span className="ml-[4px] w-[140px]">Export Summary as JUnit...</span>
          <svg width="28" height="30" viewBox="0 0 28 30" fill="none" className="ml-[6px] shrink-0"><path d="M3 2h11l5 5v12M3 2v26h8" stroke="#d6dbe0" strokeWidth="1.3" /><rect x="9" y="15" width="14" height="14" rx="1" stroke="#0a94dd" strokeWidth="1.5" /><path d="m12 21 4 5 9-13" stroke="#0a94dd" strokeWidth="3" /></svg>
          <span className="ml-[1px] w-[107px]"><span>Export full </span><u>l</u>og to...</span>
          <svg width="24" height="30" viewBox="0 0 24 30" className="ml-[3px] shrink-0"><path d="M3 2h11l5 5v21H3z" fill="none" stroke="#d6dbe0" strokeWidth="1.3" /><path d="M6 10h10v9H6z" fill="#e8751a" /><circle cx="14" cy="24" r="6" fill="#0a94dd" /><path d="M14 20v7M11 23l3-3 3 3" stroke="#fff" fill="none" strokeWidth="1.5" /></svg>
          <span className="ml-[2px] w-[51px]">Share...</span>
          <Ico><Mail {...dim} /></Ico>
          <span className="w-[98px] text-[#6d7784]">Send via E-<u>M</u>ail...</span>
          <DSep />
          <Ico className="ml-[3px]"><Printer {...dim} /></Ico>
          <span className="text-[#6d7784]"><u>P</u>rint...</span>
        </div>
        <div className="flex h-[249px] shrink-0 border border-[#66758a] bg-[#161c25]">
          <div className="flex min-w-0 flex-1 flex-col overflow-hidden pl-[19px] pr-[19px]">
            <h1 className="mt-[21px] h-[26px] text-[20px] font-normal leading-[26px] text-[#8a98a5]">Test Execution Summary</h1>
            <div className="mt-[19px] flex h-[110px] shrink-0">
              <svg width="110" height="110" viewBox="0 0 110 110" className="shrink-0">
                <path d="M55 0a55 55 0 0 0 0 110z" fill="#ffe100" />
                <path d="M55 0a55 55 0 0 1 0 110z" fill="#cd1127" />
              </svg>
              <div className="ml-[20px] flex flex-col text-[15px] text-[#8a98a5]">
                <div className="mt-[13px] text-[15px] font-bold leading-[22px] text-[#eef1f4]">RH</div>
                <div className="mt-[9px] flex h-[24px] items-center">
                  <span className="ml-[27px] h-[10px] w-[10px] rounded-full bg-black" />
                  <span className="ml-[1px] w-[157px]">Test Cases Run: <b className="text-[#eef1f4]">2</b></span>
                  <span className="h-[10px] w-[10px] rounded-full bg-[#cd1127]" />
                  <span className="w-[90px]">Failed: <b className="text-[#eef1f4]">1</b></span>
                  <span className="h-[10px] w-[10px] rounded-full bg-[#ffd400]" />
                  <span className="w-[116px]">Warnings: <b className="text-[#eef1f4]">1</b></span>
                  <span className="h-[10px] w-[10px] rounded-full bg-[#10b30f]" />
                  <span>Passed: <b className="text-[#eef1f4]">0</b></span>
                </div>
                <div className="mt-[8px] leading-[24px]">Execution duration: <b className="text-[#eef1f4]">00:00:32</b></div>
              </div>
            </div>
            <div className="mt-[22px] flex h-[28px] w-[900px] shrink-0 items-center gap-[8px] border border-[#6a6f76] pl-[12px] text-[12px] text-[#6d7784]">
              <span className="flex h-[13px] w-[11px] items-center justify-center border border-[#6d7784] text-[11px] leading-none">+</span>
              General
            </div>
            <div className="mt-[20px] flex h-[8px] w-[568px] shrink-0">
              <div className="w-[158px] border-t border-[#5a6878] bg-[#4b5662]" />
              <div className="w-[143px] border-l border-t border-[#5a6878]" />
              <div className="w-[159px] border-l border-t border-[#5a6878]" />
              <div className="w-[108px] border-x border-t border-[#5a6878]" />
            </div>
          </div>
          <div className="flex w-[17px] shrink-0 flex-col items-center bg-[#f0f0f0] text-[#777]">
            <div className="flex h-[35px] w-full items-center justify-center bg-[#f0f0f0] text-[15px] font-bold leading-none">⌃</div>
            <div className="h-[102px] w-full bg-[#c2c2c2]" />
            <div className="mt-auto flex h-[22px] w-full items-center justify-center text-[15px] font-bold leading-none">⌄</div>
          </div>
        </div>
        <div className="h-[3px] shrink-0 bg-[#4b5662]" />
        <div className="flex h-[24px] shrink-0 items-start">
          <div className="flex h-[24px] w-[59px] items-center justify-center bg-[#4b5662]">Summary</div>
          <div className="flex h-[21px] w-[66px] items-center justify-center border border-[#3b4655] bg-[#161c25]">Log Details</div>
        </div>
        <div className="h-[9px] shrink-0" />
        <PanelHead title="Locals"><Q /><Pin /><Xx /></PanelHead>
        <div className="flex h-[127px] shrink-0 flex-col border border-[#66758a] bg-[#161c25]">
          <div className="flex h-[18px] shrink-0 items-center border-b border-[#3c4046] bg-[#222836] pl-[2px]">
            <span className="w-[319px]">Name</span>
            <span className="w-[439px]">Value</span>
            <span>Type</span>
          </div>
        </div>
        <div className="h-[3px] shrink-0 bg-[#4b5662]" />
        <div className="flex h-[29px] shrink-0 items-start text-[12px]">
          <div className="flex h-[25px] w-[60px] items-center justify-center border border-[#3b4655] bg-[#161c25]">Call Stack</div>
          <div className="flex h-[29px] w-[44px] items-center justify-center bg-[#4b5662] pt-[6px]">Locals</div>
          <div className="flex h-[25px] w-[63px] items-center justify-center border border-[#3b4655] bg-[#161c25]">Watch List</div>
          <div className="flex h-[25px] w-[71px] items-center justify-center border border-[#3b4655] bg-[#161c25]">Breakpoints</div>
        </div>
      </div>
    </div>

    <div className="flex h-[23px] shrink-0 items-center bg-[#222836] text-[12px]">
      <div className="ml-[49px] flex h-[20px] items-center">
        <div className="flex h-full w-[44px] items-center justify-center border-l border-white text-[#6d7784]">CAPS</div>
        <div className="flex h-full w-[38px] items-center justify-center border-l border-white text-[#c9d0d8]">NUM</div>
        <div className="flex h-full w-[42px] items-center justify-center border-l border-white text-[#6d7784]">SCRL</div>
        <div className="flex h-full w-[43px] items-center justify-center border-l border-white text-[#eef1f4]">OVR</div>
        <div className="h-full w-[54px] border-x border-white" />
      </div>
      <div className="ml-auto mr-[4px] h-[20px] w-px bg-white" />
    </div>

    <Taskbar className="bg-[#22262e]">
      <div className="pr-[6px]"><Clock /></div>
    </Taskbar>
    <div className="flex-1 bg-black" />

    <div className="absolute right-[9px] top-[24px] flex h-[41px] w-[103px] items-center border border-[#8fa0b0] bg-[#222836] pl-[5px]">
      <TcBadge size={28} />
      <div className="ml-[6px] h-[34px] w-px bg-[#8fa0b0]" />
      <div className="ml-[9px] flex h-[16px] w-[16px] justify-between">
        <div className="w-[6px] bg-[#00a9fb]" /><div className="w-[6px] bg-[#00a9fb]" />
      </div>
      <div className="ml-[10px] h-[16px] w-[16px] bg-[#00a9fb]" />
    </div>
    <div className="absolute right-[9px] top-[68px] flex h-[40px] w-[93px] flex-col border border-[#8fa0b0] bg-[#222836] px-[3px] text-right text-[12px] leading-[17px]">
      <div className="h-[18px] border-b border-[#8fa0b0] pr-[2px] pt-[1px]">Playback</div>
      <div className="pr-[2px] pt-[2px]">RH | ExcluirSefip</div>
    </div>
  </div>
);

export default function App() {
  return (
    <div className="flex h-[900px] w-[2966px] overflow-hidden whitespace-nowrap bg-black font-['Roboto',sans-serif]">
      <div className="flex h-[900px] w-[1600px] shrink-0 flex-col bg-white">
        <PayrollWindow />
        <Taskbar className="w-[1598px] bg-[#20252e]">
          <div className="flex items-center pr-[17px]">
            <span className="mr-[14px] text-[13px] leading-none">⌃</span>
            <svg width="16" height="16" viewBox="0 0 16 16" fill="none" stroke="#fff" className="mr-[8px]"><rect x="3.5" y="1.5" width="11" height="9" /><path d="M9 11v3M5 14.5h8" /><rect x=".5" y=".5" width="4" height="4" fill="#20252e" /></svg>
            <svg width="16" height="16" viewBox="0 0 16 16" fill="none" stroke="#ddd" className="mr-[8px]"><path d="M1 6h3l4-4v12l-4-4H1zM11 5a4 4 0 0 1 0 6M13 3a7 7 0 0 1 0 10" /></svg>
            <Clock />
            <svg width="16" height="16" viewBox="0 0 16 16" fill="none" stroke="#fff" className="ml-[25px]"><path d="M1 1h14v11h-5l-2 3-2-3H1z" /></svg>
          </div>
        </Taskbar>
      </div>
      <TestComplete />
    </div>
  );
}
